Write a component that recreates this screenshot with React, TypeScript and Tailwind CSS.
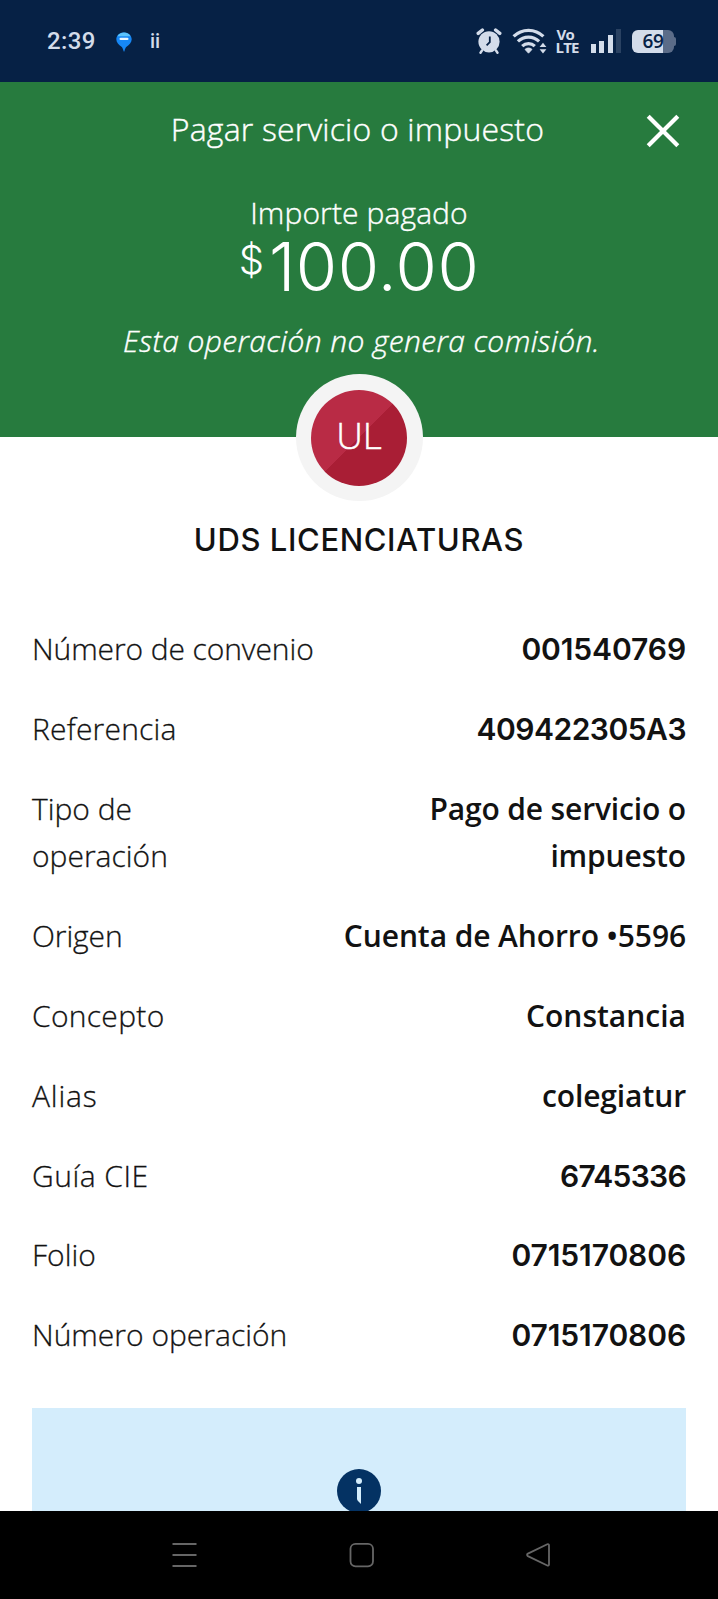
import React from 'react';

const details = [
  { label: 'Número de convenio', value: '001540769', labelStyle: '-tracking-[0.1px]', valueStyle: "pt-px font-['Inter',sans-serif] font-[560] tracking-[-0.1px]" },
  { label: 'Referencia', value: '409422305A3', labelStyle: 'tracking-[0.2px]', valueStyle: "pt-px font-['Inter',sans-serif] font-[560] tracking-[-0.5px]" },
  { label: 'Tipo de operación', value: 'Pago de servicio o impuesto', labelStyle: 'w-[180px]', valueStyle: 'w-[280px] font-semibold tracking-[-0.15px]' },
  { label: 'Origen', value: 'Cuenta de Ahorro •5596', labelStyle: 'tracking-[-0.1px]', valueStyle: 'font-semibold tracking-[-0.1px]' },
  { label: 'Concepto', value: 'Constancia', labelStyle: 'tracking-[0.3px]', valueStyle: 'font-semibold' },
  { label: 'Alias', value: 'colegiatur', labelStyle: 'tracking-[0.8px]', valueStyle: 'font-semibold tracking-[-0.1px]' },
  { label: 'Guía CIE', value: '6745336', labelStyle: 'tracking-[0.5px]', valueStyle: "pt-px font-['Inter',sans-serif] font-[560] tracking-[-0.7px]" },
  { label: 'Folio', value: '0715170806', labelStyle: 'tracking-[0px]', valueStyle: "pt-px font-['Inter',sans-serif] font-[560] tracking-[-0.1px]" },
  { label: 'Número operación', value: '0715170806', labelStyle: 'tracking-[0px]', valueStyle: "pt-px font-['Inter',sans-serif] font-[560] tracking-[-0.1px]" },
];

function StatusBar() {
  return (
    <div className="flex h-[82px] shrink-0 items-center bg-[#062145] pr-[42px] pl-[47px] font-['Roboto',sans-serif] text-[#d3dcea]">
      <span className="w-[69px] text-[24px] leading-none font-medium tracking-[0.4px]">2:39</span>
      <svg className="mt-0.5 h-5 w-4" viewBox="0 0 16 20">
        <path d="M8 0.4C3.6 0.4 0.3 3.4 0.3 7.2c0 3.4 2.5 5.6 5.2 7.6 1 .8 1.7 2.6 2.2 4.8h.7c.4-2.2 1.1-4 2.1-4.8 2.7-2 5.2-4.2 5.2-7.6C15.7 3.4 12.4.4 8 .4z" fill="#1687f5" />
        <path d="M1.5 4.2C2.7 1.8 5 .5 8 .5s5.3 1.3 6.5 3.7z" fill="#5cc3fb" />
        <rect x="3.5" y="5.8" width="9" height="2.200" rx="1.100" fill="#e9f6ff" />
      </svg>
      <span className="ml-[18px] text-[20px] leading-none font-medium">ii</span>

      <div className="ml-auto flex items-center">
        {/* Alarm */}
        <svg className="h-[26px] w-[26px]" viewBox="0 0 26 26">
          <circle cx="13" cy="13.8" r="10.6" fill="#d3dcea" />
          <path d="M2.2 5.4L6.4 2M23.8 5.4L19.6 2" stroke="#d3dcea" strokeWidth="3.4" strokeLinecap="round" />
          <path d="M6 22.5l-1.5 2.2M20 22.5l1.5 2.2" stroke="#d3dcea" strokeWidth="2.4" strokeLinecap="round" />
          <path d="M13.8 8.5v5.7L10.6 17.4" stroke="#062145" strokeWidth="1.8" fill="none" />
        </svg>
        {/* Wi-Fi */}
        <svg className="ml-[10px] h-[26px] w-[36px]" viewBox="0 0 36 26" fill="none" stroke="#d3dcea">
          <path d="M1.6 8.4c8.3-8.1 21.500-8.100 29.800 0" strokeWidth="3.200" />
          <path d="M5.9 13.4c6-5.8 15.2-5.8 21.2 0" strokeWidth="3.200" />
          <path d="M10.2 18.2c3.6-3.5 9-3.5 12.600 0" strokeWidth="3.200" />
          <path d="M13 21.4c2-1.9 5-1.9 7 0l-3.5 3.8z" fill="#d3dcea" strokeWidth="0.8" />
          <path d="M31 14.8l3.4 4.2h-6.800zM31 25.4l3.4-4.2h-6.800z" fill="#d3dcea" stroke="none" />
        </svg>
        <div className="ml-2 w-[24px] font-['Open_Sans',sans-serif] text-[15px] leading-[13px] font-bold tracking-[-0.8px]">
          <div className="pl-px">Vo</div>
          <div>LTE</div>
        </div>
        {/* Signal */}
        <div className="ml-[11px] flex h-6 items-end gap-[3.5px]">
          <span className="h-[9px] w-[5px] bg-[#d3dcea]" />
          <span className="h-3 w-[5px] bg-[#d3dcea]" />
          <span className="h-[18px] w-[5px] bg-[#d3dcea]" />
          <span className="h-6 w-[5px] bg-[#2a4262]" />
        </div>
        {/* Battery */}
        <div className="ml-[11px] flex items-center">
          <div className="flex h-[23px] w-[42px] items-center justify-center rounded-[6px] bg-[linear-gradient(to_right,#d3dcea_31px,#5b6c88_31px)] font-['Open_Sans',sans-serif] text-[19px] leading-none font-semibold tracking-[-0.3px] text-[#062145]">
            69
          </div>
          <span className="h-[9px] w-[2px] rounded-r-full bg-[#5b6c88]" />
        </div>
      </div>
    </div>
  );
}

function Header() {
  return (
    <header className="h-[355px] shrink-0 bg-[#277b3e] pt-[25px] text-center font-light text-white">
      <div className="grid grid-cols-[1fr_auto_1fr] items-center [-webkit-text-stroke:0.4px]">
        <h1 className="col-start-2 mr-[3px] text-[32px] leading-[44px] tracking-[0.18px]">Pagar servicio o impuesto</h1>
        <button className="mt-[3px] mr-[38px] justify-self-end" aria-label="Cerrar">
          <svg className="h-[34px] w-[34px]" viewBox="0 0 34 34" stroke="white" strokeWidth="4.2">
            <path d="M2.2 2.2l29.6 29.6M31.8 2.2L2.2 31.8" />
          </svg>
        </button>
      </div>
      <p className="mt-[42px] text-[30px] leading-[40px] tracking-[0.1px] [-webkit-text-stroke:0.4px]">Importe pagado</p>
      <div className="-mt-0.5 flex justify-center gap-[5px] font-['Inter',sans-serif] leading-[72px]">
        <span className="-mt-[7px] text-[40px]">$</span>
        <span className="text-[67px] tracking-[0.5px]">100.00</span>
      </div>
      <p className="mt-[18px] pl-[5px] text-[30px] leading-[40px] tracking-[0.38px] italic [-webkit-text-stroke:0.4px]">Esta operación no genera comisión.</p>
    </header>
  );
}

function NavBar() {
  return (
    <nav className="flex h-[88px] shrink-0 items-center justify-between bg-black pr-[167px] pl-[172px]">
      <svg className="h-[26px] w-[26px]" viewBox="0 0 26 26" stroke="#666" strokeWidth="1.8">
        <path d="M0.5 2h24M0.5 13h24M0.5 24h24" />
      </svg>
      <svg className="h-[26px] w-[26px]" viewBox="0 0 26 26" fill="none" stroke="#666" strokeWidth="1.8">
        <rect x="1.5" y="1.8" width="22.5" height="22.5" rx="5" />
      </svg>
      <svg className="h-[26px] w-[26px]" viewBox="0 0 26 26" fill="none" stroke="#666" strokeWidth="1.8" strokeLinejoin="round">
        <path d="M22.3 2.2L2.9 11.6c-1.1.6-1.1 1.9 0 2.5l19.4 9.4c.8.4 1.7-.1 1.7-1V3.2c0-.9-.9-1.4-1.7-1z" />
      </svg>
    </nav>
  );
}

export default function App() {
  return (
    <div className="flex h-[1599px] w-[718px] flex-col overflow-hidden bg-white font-['Open_Sans',sans-serif] text-[#121212]">
      <StatusBar />
      <Header />

      <main className="flex min-h-0 flex-1 flex-col">
        <div className="z-10 mx-auto -mt-[63px] flex size-[127px] shrink-0 items-center justify-center rounded-full bg-[#f4f4f4]">
          <div className="flex size-24 items-center justify-center rounded-full bg-[linear-gradient(135deg,#b92b45_50%,#a91e35_50%)] pb-[7px] text-[37px] leading-none font-light text-white [-webkit-text-stroke:0.5px]">
            UL
          </div>
        </div>
        <h2 className="mt-[15px] text-center font-['Inter',sans-serif] text-[31px] leading-[48px] font-[550] tracking-[0.6px]">
          UDS LICENCIATURAS
        </h2>

        <dl className="mt-[61px] flex shrink-0 flex-col gap-8 px-8 text-[30px] leading-[47.8px]">
          {details.map((row) => (
            <div key={row.label} className="flex items-start justify-between">
              <dt className={`font-light [-webkit-text-stroke:0.3px] ${row.labelStyle}`}>{row.label}</dt>
              <dd className={`-mb-px text-right ${row.valueStyle}`}>{row.value}</dd>
            </div>
          ))}
        </dl>

        <div className="mx-8 mt-[49.5px] flex min-h-0 flex-1 justify-center overflow-hidden bg-[#d4edfc] pt-[61px]">
          <svg className="size-11 shrink-0" viewBox="0 0 44 44">
            <circle cx="22" cy="22" r="22" fill="#043263" />
            <circle cx="22" cy="12" r="3" fill="#d4edfc" />
            <path d="M20 18h4v17l-2.5-2.4c-1-1-1.5-1.6-1.5-3z" fill="#d4edfc" />
          </svg>
        </div>
      </main>

      <NavBar />
    </div>
  );
}
